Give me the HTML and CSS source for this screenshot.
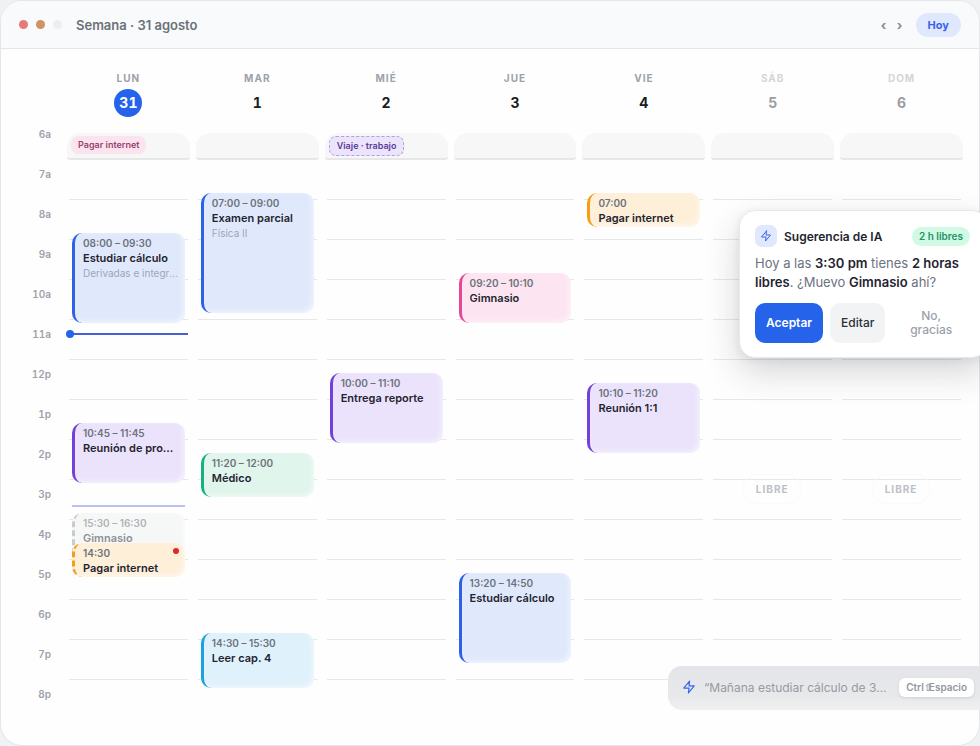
FILE: index.html
```html
<!DOCTYPE html>
<html lang="es">
<head>
<meta charset="utf-8">
<meta name="viewport" content="width=device-width, initial-scale=1">
<title>Semana · 31 agosto</title>
<link rel="stylesheet" href="styles.css">
</head>
<body>
<main class="window">
  <header class="bar">
    <span class="dot dot-red"></span><span class="dot dot-amber"></span><span class="dot dot-idle"></span>
    <h1 class="bar-title">Semana · 31 agosto</h1>
    <button class="nav" type="button" aria-label="Semana anterior">‹</button>
    <button class="nav" type="button" aria-label="Semana siguiente">›</button>
    <button class="today" type="button">Hoy</button>
  </header>
  <div class="calendar">
    <div class="hours">
      <span>6a</span><span>7a</span><span>8a</span><span>9a</span><span>10a</span><span>11a</span><span>12p</span><span>1p</span><span>2p</span><span>3p</span><span>4p</span><span>5p</span><span>6p</span><span>7p</span><span>8p</span>
    </div>
    <div class="week">
      <section class="day">
        <h2 class="day-name">Lun</h2><span class="day-number current">31</span>
        <div class="all-day"><span class="chip chip-pink">Pagar internet</span></div>
        <div class="track">
          <article class="event blue" style="--top:73px;--size:90px"><time>08:00 – 09:30</time><h3>Estudiar cálculo</h3><p>Derivadas e integrales</p></article>
          <div class="now" style="--top:173px"></div>
          <article class="event violet" style="--top:263px;--size:60px"><time>10:45 – 11:45</time><h3>Reunión de proyecto</h3></article>
          <div class="drop-line" style="--top:345px"></div>
          <article class="event ghost" style="--top:353px;--size:60px"><time>15:30 – 16:30</time><h3>Gimnasio</h3></article>
          <article class="event amber moving" style="--top:383px;--size:34px"><time>14:30</time><h3>Pagar internet</h3><span class="alert"></span></article>
        </div>
      </section>
      <section class="day">
        <h2 class="day-name">Mar</h2><span class="day-number">1</span>
        <div class="all-day"></div>
        <div class="track">
          <article class="event blue" style="--top:33px;--size:120px"><time>07:00 – 09:00</time><h3>Examen parcial</h3><p>Física II</p></article>
          <article class="event green" style="--top:293px;--size:44px"><time>11:20 – 12:00</time><h3>Médico</h3></article>
          <article class="event sky" style="--top:473px;--size:55px"><time>14:30 – 15:30</time><h3>Leer cap. 4</h3></article>
        </div>
      </section>
      <section class="day">
        <h2 class="day-name">Mié</h2><span class="day-number">2</span>
        <div class="all-day"><span class="chip chip-violet">Viaje · trabajo</span></div>
        <div class="track">
          <article class="event violet" style="--top:213px;--size:70px"><time>10:00 – 11:10</time><h3>Entrega reporte</h3></article>
        </div>
      </section>
      <section class="day">
        <h2 class="day-name">Jue</h2><span class="day-number">3</span>
        <div class="all-day"></div>
        <div class="track">
          <article class="event pink" style="--top:113px;--size:50px"><time>09:20 – 10:10</time><h3>Gimnasio</h3></article>
          <article class="event blue" style="--top:413px;--size:90px"><time>13:20 – 14:50</time><h3>Estudiar cálculo</h3></article>
        </div>
      </section>
      <section class="day">
        <h2 class="day-name">Vie</h2><span class="day-number">4</span>
        <div class="all-day"></div>
        <div class="track">
          <article class="event amber" style="--top:33px;--size:34px"><time>07:00</time><h3>Pagar internet</h3></article>
          <article class="event violet" style="--top:223px;--size:70px"><time>10:10 – 11:20</time><h3>Reunión 1:1</h3></article>
        </div>
      </section>
      <section class="day weekend">
        <h2 class="day-name">Sáb</h2><span class="day-number">5</span>
        <div class="all-day"></div>
        <div class="track"><span class="free">Libre</span></div>
      </section>
      <section class="day weekend">
        <h2 class="day-name">Dom</h2><span class="day-number">6</span>
        <div class="all-day"></div>
        <div class="track"><span class="free">Libre</span></div>
      </section>
    </div>
  </div>
</main>

<aside class="suggestion">
  <div class="suggestion-head">
    <span class="suggestion-icon"><svg class="bolt" viewBox="0 0 24 24" aria-hidden="true"><path d="M13 2 3 14h9l-1 8 10-12h-9l1-8z"/></svg></span>
    <h2>Sugerencia de IA</h2>
    <span class="badge">2 h libres</span>
  </div>
  <p>Hoy a las <b>3:30 pm</b> tienes <b>2 horas libres</b>. ¿Muevo <b>Gimnasio</b> ahí?</p>
  <div class="actions">
    <button class="action primary" type="button">Aceptar</button>
    <button class="action secondary" type="button">Editar</button>
    <button class="action plain" type="button">No, gracias</button>
  </div>
</aside>

<div class="quick-add">
  <svg class="bolt" viewBox="0 0 24 24" aria-hidden="true"><path d="M13 2 3 14h9l-1 8 10-12h-9l1-8z"/></svg>
  <input type="text" aria-label="Añadir evento" placeholder="“Mañana estudiar cálculo de 3 a 5”">
  <kbd>Ctrl<span class="shift">⇧</span>Espacio</kbd>
</div>
</body>
</html>
```
FILE: styles.css
```css
* { box-sizing: border-box; }
body {
  margin: 0;
  min-height: 100vh;
  position: relative;
  overflow: hidden;
  background: #f0f1f2;
  color: #1f2430;
  font-family: Inter, "Liberation Sans", sans-serif;
  font-size: 13px;
}
h1, h2, h3, p { margin: 0; }
button, input, kbd { font: inherit; }
button { border: 0; padding: 0; background: none; }

.window {
  min-height: 100vh;
  border: 1px solid #e4e6e8;
  border-radius: 22px;
  background: #fefefe;
  overflow: hidden;
}
.bar {
  display: flex;
  align-items: center;
  height: 48px;
  padding: 0 18px;
  background: #f8fafb;
  border-bottom: 1px solid #e4e6e8;
}
.dot { width: 9px; height: 9px; margin-right: 8px; border-radius: 50%; }
.dot-red { background: #e8797b; }
.dot-amber { background: #cf9264; }
.dot-idle { background: #edeef0; }
.bar-title { margin: 0 auto 0 6px; font-size: 13px; font-weight: 600; color: #6b7178; }
.nav { width: 16px; padding-top: 1px; font-size: 13px; font-weight: 700; line-height: 20px; color: #858a91; }
.today {
  height: 24px;
  margin-left: 8px;
  padding: 0 12px;
  border-radius: 12px;
  background: #dfe8fc;
  color: #3a62e8;
  font-size: 11px;
  font-weight: 700;
}

.calendar { display: flex; padding: 22px 17px 24px 0; }
.hours {
  display: flex;
  flex-direction: column;
  flex: 0 0 67px;
  padding: 43px 17px 0 0;
  text-align: right;
  font-size: 10px;
  font-weight: 600;
  font-variant-numeric: tabular-nums;
  color: #9ca1ab;
}
.hours span { height: 40px; line-height: 40px; }
.week { display: grid; flex: 1; grid-template-columns: repeat(7, minmax(0, 1fr)); gap: 8px; }
.day { display: flex; flex-direction: column; align-items: center; }
.day-name {
  margin-bottom: 4px;
  font-size: 10px;
  line-height: 14px;
  font-weight: 700;
  letter-spacing: 1px;
  text-transform: uppercase;
  color: #9ca1ab;
}
.day-number {
  min-width: 28px;
  margin-bottom: 16px;
  border-radius: 14px;
  font-size: 14px;
  line-height: 28px;
  font-weight: 700;
  font-variant-numeric: tabular-nums;
  text-align: center;
  color: #1a1d24;
}
.day-number.current { background: #2563eb; color: #fff; }
.weekend .day-name { color: #d3d5d9; }
.weekend .day-number { color: #9a9da2; }
.all-day {
  align-self: stretch;
  display: flex;
  align-items: flex-start;
  height: 27px;
  margin: 0 -1px;
  padding: 3px 4px;
  border-bottom: 2px solid #e6e7e8;
  border-radius: 14px 14px 3px 3px;
  background: #f7f7f7;
}
.chip {
  padding: 0 7px;
  border-radius: 7px;
  font-size: 9px;
  line-height: 18px;
  font-weight: 600;
}
.chip-pink { background: #fce4ef; color: #98436f; }
.chip-violet { border: 1px dashed #b79ae9; background: #ebe4fb; color: #5b3a9c; }

.track {
  position: relative;
  align-self: stretch;
  height: 520px;
  margin: 0 1px 0 0;
  background: repeating-linear-gradient(#0000 0 39px, #e6e7e9 39px 40px) 1px 0 no-repeat;
}
.event {
  position: absolute;
  inset: var(--top) 3px auto 4px;
  height: var(--size);
  display: flex;
  flex-direction: column;
  padding: 3px 8px;
  border-left: 3px solid var(--edge);
  border-radius: 10px;
  background: var(--fill);
  box-shadow: inset -2px -2px 5px #ffffff80;
}
.event time { flex: none; font-size: 10px; line-height: 15px; font-weight: 600; color: #6c727b; white-space: nowrap; }
.event h3, .event p { min-height: 0; overflow: hidden; white-space: nowrap; text-overflow: ellipsis; line-height: 15px; }
.event h3 { font-size: 11px; font-weight: 600; }
.event p { margin-right: -4px; font-size: 10px; color: #9ca6b8; }
.blue { --edge: #2c63e6; --fill: #e0e9fb; }
.violet { --edge: #7440da; --fill: #ebe3fb; }
.green { --edge: #17b27c; --fill: #e0f5ec; }
.sky { --edge: #1ba3dd; --fill: #dff1fb; }
.pink { --edge: #e64897; --fill: #fce5f1; }
.amber { --edge: #f59e16; --fill: #feefd9; }
.ghost { --edge: #c9cccf; --fill: #f6f8f8; border-left-style: dashed; }
.ghost time { color: #b0b3b7; }
.ghost h3 { color: #8e9196; }
.moving { border-left-style: dashed; }
.alert { position: absolute; top: 5px; right: 6px; width: 6px; height: 6px; border-radius: 50%; background: #dc2630; }
.now { position: absolute; inset: var(--top) 0 auto 0; height: 2px; background: #4560d4; }
.now::before { content: ""; position: absolute; left: -2px; top: -3px; width: 8px; height: 8px; border-radius: 50%; background: #2563eb; }
.drop-line { position: absolute; inset: var(--top) 3px auto 4px; height: 2px; background: #bcc2ef; }
.free {
  position: absolute;
  top: 314px;
  left: 50%;
  transform: translateX(-50%);
  padding: 0 12px;
  border: 1px solid #fafafa;
  border-radius: 15px;
  font-size: 10px;
  line-height: 28px;
  font-weight: 700;
  letter-spacing: 1px;
  text-transform: uppercase;
  color: #bcc0c6;
}

.bolt { fill: none; stroke: #3866e8; stroke-width: 2; stroke-linecap: round; stroke-linejoin: round; }
.suggestion {
  position: absolute;
  top: 210px;
  right: -8px;
  width: 249px;
  padding: 14px 17px 14px 15px;
  border: 1px solid #e6e8ea;
  border-radius: 16px;
  background: #fff;
  box-shadow: 0 14px 34px #1f243030, 0 2px 8px #1f243012;
}
.suggestion-head { display: flex; align-items: center; gap: 7px; height: 22px; }
.suggestion-icon { display: flex; align-items: center; justify-content: center; width: 22px; height: 22px; border-radius: 7px; background: #e0e8fd; }
.suggestion-icon .bolt { width: 12px; height: 12px; }
.suggestion h2 { font-size: 12px; font-weight: 600; white-space: nowrap; }
.badge { margin-left: auto; padding: 0 7px; border-radius: 10px; background: #d1fae5; color: #279268; font-size: 10px; line-height: 19px; font-weight: 600; white-space: nowrap; }
.suggestion p { margin: 7px 0 11px; font-size: 13px; line-height: 19px; color: #6b7280; }
.suggestion b { font-weight: 600; color: #1f2430; }
.actions { display: flex; gap: 7px; }
.action { height: 40px; padding: 0 11px; border-radius: 10px; font-size: 12px; line-height: 14px; font-weight: 500; }
.primary { background: #2563eb; color: #fff; font-weight: 600; }
.secondary { background: #f2f3f4; color: #2a2f39; }
.plain { flex: 1; color: #9ca1ab; }

.quick-add {
  position: absolute;
  right: -10px;
  bottom: 36px;
  display: flex;
  align-items: center;
  width: 322px;
  height: 44px;
  padding: 0 16px 2px 14px;
  border-radius: 14px;
  background: linear-gradient(#e3e5e8, #e7e9eb 70%, #eff0f2);
}
.quick-add .bolt { flex: none; width: 14px; height: 14px; }
.quick-add input { flex: 1; min-width: 0; margin: 0 12px 0 8px; padding: 0; border: 0; background: none; outline: 0; font-size: 12px; text-overflow: ellipsis; }
.quick-add input::placeholder { color: #969ba3; opacity: 1; }
kbd { padding: 0 7px; border-radius: 6px; background: #fff; box-shadow: 0 1px 3px #1f24301f; color: #92979f; font-size: 10px; line-height: 19px; font-weight: 600; white-space: nowrap; }
.shift { display: inline-block; width: 5px; font-family: "DejaVu Sans", sans-serif; line-height: 10px; }
```
